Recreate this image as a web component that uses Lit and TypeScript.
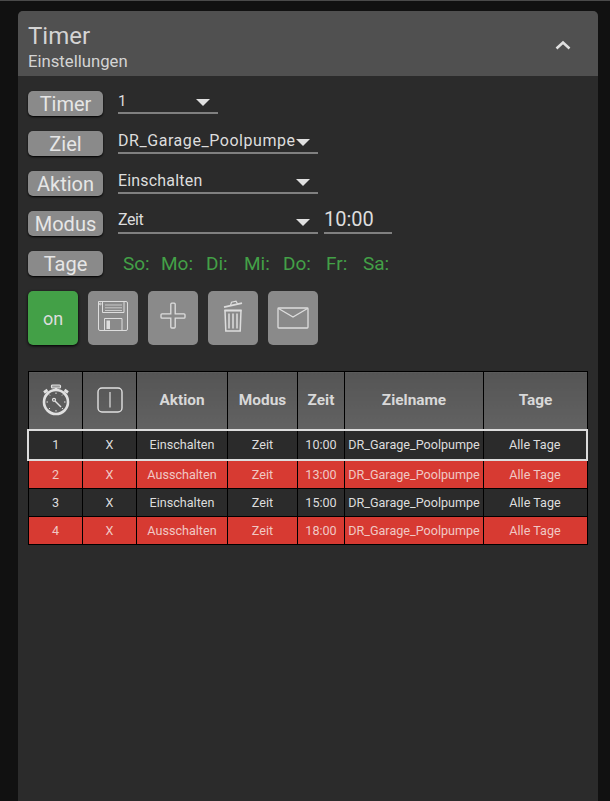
import { LitElement, html, css, svg } from "lit";
import { customElement } from "lit/decorators.js";

const rows = [
  { n: 1, a: "Einschalten", t: "10:00", sel: true, red: false },
  { n: 2, a: "Ausschalten", t: "13:00", sel: false, red: true },
  { n: 3, a: "Einschalten", t: "15:00", sel: false, red: false },
  { n: 4, a: "Ausschalten", t: "18:00", sel: false, red: true },
];
const days = ["So:", "Mo:", "Di:", "Mi:", "Do:", "Fr:", "Sa:"];

const caret = html`<svg class="caret" width="14" height="7" viewBox="0 0 14 7"><path d="M0 0H14L7 7Z" fill="#e0e0e0"/></svg>`;

const floppy = svg`<svg width="32" height="32" viewBox="0 0 32 32" fill="none" stroke="#ddd" stroke-width="1"><path d="M1.500 1.500H29a1.500 1.500 0 0 1 1.500 1.500V29a1.500 1.500 0 0 1-1.500 1.500H3A1.500 1.500 0 0 1 1.500 29Z"/><path d="M5.500 1.500V12.500H27V1.500"/><path d="M8 5H25M8 7.800H25M8 10.500H25" stroke-opacity=".75"/><path d="M7.500 30.500V18.500H25V30.500"/><rect x="9.500" y="20.500" width="3.500" height="8.500" fill="#ddd" stroke="none"/><circle cx="3.300" cy="4" r=".9"/></svg>`;
const plus = svg`<svg width="32" height="32" viewBox="0 0 32 32" fill="none" stroke="#ddd" stroke-width="1.300"><path d="M13.800 4.200a1 1 0 0 1 1-1h2.400a1 1 0 0 1 1 1V13.800H27a1 1 0 0 1 1 1v2.400a1 1 0 0 1-1 1H18.200V27a1 1 0 0 1-1 1h-2.400a1 1 0 0 1-1-1V18.200H5a1 1 0 0 1-1-1v-2.400a1 1 0 0 1 1-1H13.800Z"/></svg>`;
const trash = svg`<svg width="24" height="34" viewBox="0 0 24 34" fill="none" stroke="#ddd" stroke-width="1.200"><path d="M4 11.500H20L19.200 32H4.800Z" stroke-width="1.500"/><path d="M3.500 11.500H20.500" stroke-width="1.800"/><path d="M8 14.500V29.500M12 14.500V29.500M16 14.500V29.500" stroke-width="1.500"/><path d="M3 8.200L21 4.200" stroke-width="1.800"/><path d="M9.500 6.500L10.500 3.200L15 2.200L16.500 4.800"/></svg>`;
const mail = svg`<svg width="32" height="22" viewBox="0 0 32 22" fill="none" stroke="#ddd" stroke-width="1.300"><rect x="1" y="1" width="30" height="20" rx=".8"/><path d="M1.500 1.500L16 10L30.500 1.500"/></svg>`;
const watch = svg`<svg width="30" height="32" viewBox="0 0 30 32" fill="none" stroke="#e0e0e0"><rect x="10.500" y="1" width="9" height="3" rx="1" fill="#ddd" fill-opacity=".5" stroke-width="1.200"/><path d="M15 4V6" stroke-width="2.500"/><circle cx="15" cy="18" r="12" stroke-width="2.600"/><path d="M3 8.500L6.500 6M27 8.500L23.500 6" stroke-width="2.800"/><circle cx="13" cy="15.800" r="1.500" stroke-width="1.200"/><path d="M14 17L20 23" stroke-width="1.400"/><path d="M15 8.500V10M7 18H5.500M24.500 18H23M15 26V27.500M9 11.500L8 10.500M21 11.500L22 10.500M9 24L8 25M21.800 25L21 24" stroke-width="1"/></svg>`;
const power = svg`<svg width="26" height="26" viewBox="0 0 26 26" fill="none" stroke="#e0e0e0" stroke-width="1.400"><rect x="1" y="1" width="24" height="24" rx="4"/><path d="M13 5V20.500" stroke-width="1.200"/></svg>`;

@customElement("app-root")
export class AppRoot extends LitElement {
  static styles = css`
    :host {
      display: flex;
      flex-direction: column;
      box-sizing: border-box;
      width: 610px;
      height: 801px;
      overflow: hidden;
      background: #111;
      border-top: 1px solid #4a4a4a;
      padding: 10px 12px 0 18px;
      font-family: Roboto, "Liberation Sans", sans-serif;
      color: #ddd;
    }
    .card {
      flex: 1;
      display: flex;
      flex-direction: column;
      background: #2b2b2b;
      border-radius: 5px 5px 0 0;
      overflow: hidden;
    }
    .head {
      height: 65px;
      box-sizing: border-box;
      background: #505050;
      padding: 11px 9px 0 10px;
      display: flex;
      justify-content: space-between;
    }
    .title { font-size: 24px; line-height: 28px; color: #d4d4d4; }
    .sub { font-size: 16.700px; line-height: 20px; color: #d4d4d4; margin-top: 2px; }
    .chev { margin: 18px 18px 0 0; }
    .body { padding: 15px 10px 0; display: flex; flex-direction: column; }
    .form { display: flex; flex-direction: column; gap: 15px; }
    .row { display: flex; align-items: flex-start; height: 25px; }
    .tag {
      width: 75px;
      height: 25px;
      box-sizing: border-box;
      background: #8a8a8a;
      border-radius: 5px;
      box-shadow: 0 1px 2px #000;
      font-size: 20px;
      line-height: 26px;
      text-align: center;
      color: #e6e6e6;
      margin-right: 15px;
    }
    .select {
      position: relative;
      width: 200px;
      height: 21px;
      border-bottom: 2px solid #808080;
      font-size: 15px;
      line-height: 20px;
      color: #ddd;
      white-space: nowrap;
    }
    .select.short { width: 100px; }
    .select.wide { font-size: 16px; letter-spacing: 0.550px; }
    .select.mid { font-size: 16px; letter-spacing: 0.180px; }
    .select.tight { font-size: 16px; letter-spacing: -0.400px; line-height: 18px; }
    .caret { position: absolute; right: 8px; top: 8px; }
    .time {
      width: 68px;
      height: 21px;
      margin-left: 6px;
      border-bottom: 2px solid #808080;
      font-size: 20px;
      line-height: 16px;
      color: #ddd;
    }
    .days {
      display: grid;
      grid-template-columns: 38px 45px 38px 39px 43px 37px auto;
      padding: 2px 0 0 5px;
      font-size: 19px;
      line-height: 22px;
      color: #43a047;
    }
    .actions { display: flex; gap: 10px; margin-top: 15px; }
    .btn {
      width: 50px;
      height: 54px;
      box-sizing: border-box;
      border-radius: 5px;
      background: #8a8a8a;
      display: flex;
      align-items: center;
      justify-content: center;
    }
    .btn.up { padding-bottom: 4px; }
    .btn.on {
      background: #43a047;
      box-shadow: 0 1px 3px #000;
      font-size: 18px;
      color: #ddd;
    }
    table {
      margin: 26px 0 0 -1px;
      width: 560px;
      border-collapse: collapse;
      table-layout: fixed;
      font-size: 12.600px;
    }
    th, td {
      border: 1px solid #000;
      text-align: center;
      padding: 0 0 0 1px;
      overflow: hidden;
      white-space: nowrap;
    }
    th {
      height: 55px;
      padding-bottom: 2px;
      background: linear-gradient(#555, #626262);
      font-size: 15.400px;
      font-weight: 700;
      color: #d8d8d8;
    }
    th svg { display: block; margin: auto; }
    td { height: 27px; color: #ddd; background: #2b2b2b; }
    td:last-child { padding-left: 0; }
    tr.red td { background: #d73a32; color: #f0c8c4; }
    tr.sel td { height: 26px; padding-bottom: 2px; border-top-color: #ddd; border-bottom-color: #ddd; border-top-width: 2px; border-bottom-width: 2px; }
    tr.sel td:first-child { border-left: 2px solid #ddd; }
    tr.sel td:last-child { border-right: 2px solid #ddd; }
  `;

  render() {
    return html`
      <div class="card">
        <div class="head">
          <div>
            <div class="title">Timer</div>
            <div class="sub">Einstellungen</div>
          </div>
          <svg class="chev" width="16" height="10" viewBox="0 0 16 10" fill="none"><path d="M1.500 8.500L8 2.500L14.500 8.500" stroke="#e0e0e0" stroke-width="2.500"/></svg>
        </div>
        <div class="body">
          <div class="form">
            <div class="row"><div class="tag">Timer</div><div class="select short">1${caret}</div></div>
            <div class="row"><div class="tag">Ziel</div><div class="select wide">DR_Garage_Poolpumpe${caret}</div></div>
            <div class="row"><div class="tag">Aktion</div><div class="select mid">Einschalten${caret}</div></div>
            <div class="row"><div class="tag">Modus</div><div class="select tight">Zeit${caret}</div><div class="time">10:00</div></div>
            <div class="row"><div class="tag">Tage</div><div class="days">${days.map((d) => html`<span>${d}</span>`)}</div></div>
          </div>
          <div class="actions">
            <div class="btn on">on</div>
            <div class="btn up">${floppy}</div>
            <div class="btn up">${plus}</div>
            <div class="btn up">${trash}</div>
            <div class="btn">${mail}</div>
          </div>
          <table>
            <colgroup>
              <col style="width:54px" /><col style="width:54px" /><col style="width:91px" /><col style="width:70px" /><col style="width:47px" /><col style="width:139px" /><col style="width:104px" />
            </colgroup>
            <thead>
              <tr><th>${watch}</th><th>${power}</th><th>Aktion</th><th>Modus</th><th>Zeit</th><th>Zielname</th><th>Tage</th></tr>
            </thead>
            <tbody>
              ${rows.map(
                (r) => html`<tr class="${r.red ? "red" : ""} ${r.sel ? "sel" : ""}">
                  <td>${r.n}</td><td>X</td><td>${r.a}</td><td>Zeit</td><td>${r.t}</td><td>DR_Garage_Poolpumpe</td><td>Alle Tage</td>
                </tr>`
              )}
            </tbody>
          </table>
        </div>
      </div>
    `;
  }
}
